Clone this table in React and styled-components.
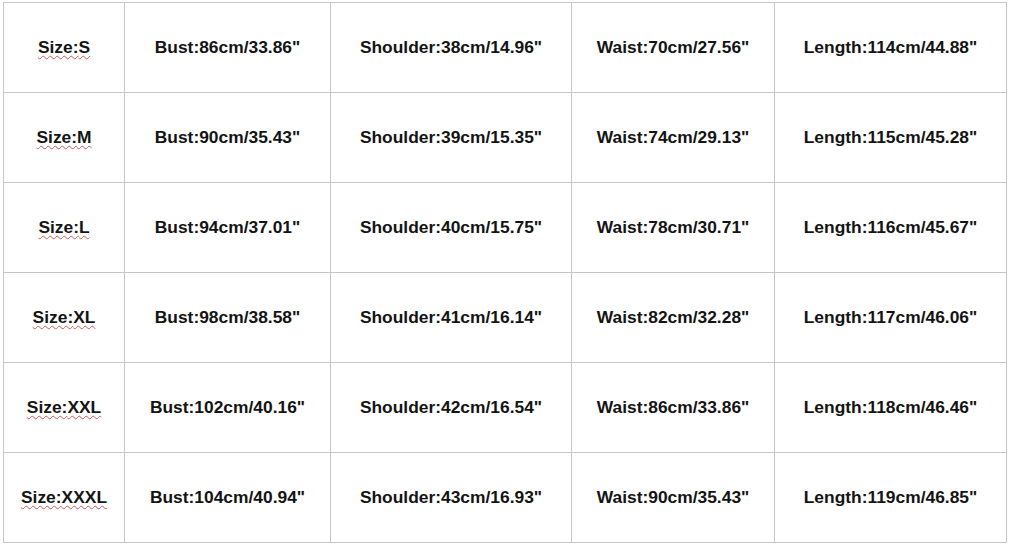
import React from 'react';
import styled, { createGlobalStyle } from 'styled-components';

const rows = [
  ['S', '86cm/33.86"', '38cm/14.96"', '70cm/27.56"', '114cm/44.88"'],
  ['M', '90cm/35.43"', '39cm/15.35"', '74cm/29.13"', '115cm/45.28"'],
  ['L', '94cm/37.01"', '40cm/15.75"', '78cm/30.71"', '116cm/45.67"'],
  ['XL', '98cm/38.58"', '41cm/16.14"', '82cm/32.28"', '117cm/46.06"'],
  ['XXL', '102cm/40.16"', '42cm/16.54"', '86cm/33.86"', '118cm/46.46"'],
  ['XXXL', '104cm/40.94"', '43cm/16.93"', '90cm/35.43"', '119cm/46.85"'],
];

export default function App() {
  return (
    <>
      <GlobalStyle />
      <Page>
        <Chart>
          {rows.map(r => (
            <React.Fragment key={r[0]}>
              <Cell>
                <SizeLabel>Size:{r[0]}</SizeLabel>
              </Cell>
              <Cell>Bust:{r[1]}</Cell>
              <Cell>Shoulder:{r[2]}</Cell>
              <Cell>Waist:{r[3]}</Cell>
              <Cell>Length:{r[4]}</Cell>
            </React.Fragment>
          ))}
        </Chart>
      </Page>
    </>
  );
}

const GlobalStyle = createGlobalStyle`
  body {
    margin: 0;
    background: #fff;
    font-family: "Liberation Sans", Arial, sans-serif;
  }
`;

const Page = styled.div`
  width: 1009px;
  height: 549px;
  padding: 2px 0 0 3px;
  box-sizing: border-box;
  background: #fff;
`;

const Chart = styled.div`
  display: grid;
  grid-template-columns: 120px 205px 240px 202px 231px;
  grid-auto-rows: 89px;
  gap: 1px;
  padding: 1px;
  width: max-content;
  background: #c6c6c6;
`;

const Cell = styled.div`
  display: flex;
  align-items: center;
  justify-content: center;
  background: #fff;
  color: #141414;
  font-size: 17.4px;
  font-weight: bold;
  white-space: nowrap;
`;

const SizeLabel = styled.span`
  text-decoration: underline wavy #d05a5a;
  text-decoration-thickness: 1px;
  text-underline-offset: 2px;
`;
